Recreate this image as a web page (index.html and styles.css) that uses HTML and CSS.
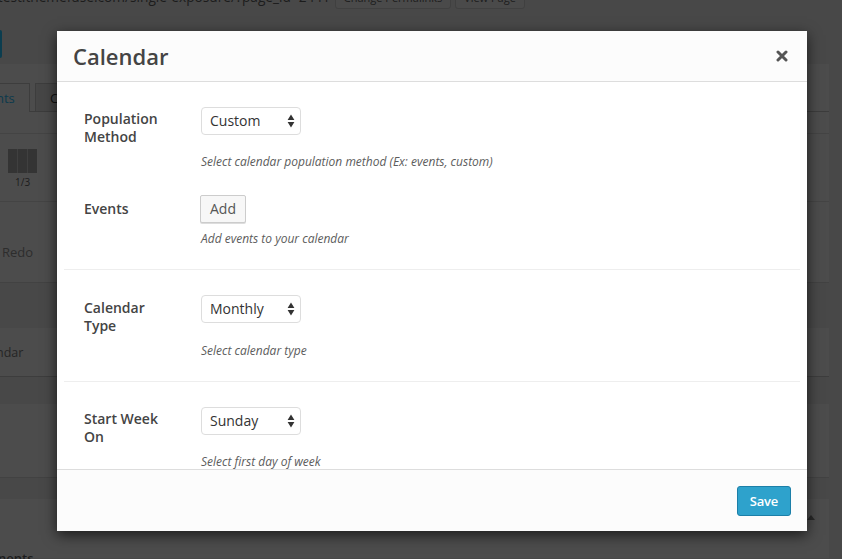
FILE: index.html
```html
<!DOCTYPE html>
<html lang="en">
<head>
<meta charset="utf-8">
<title>Calendar</title>
<link rel="stylesheet" href="styles.css">
</head>
<body>
<div class="page">
  <div class="permalink">
    <span class="url">//test.themefuse.com/single-exposure/?page_id=2441</span>
    <span class="mini-btn change">Change Permalinks</span>
    <span class="mini-btn view">View Page</span>
  </div>
  <div class="mode"><span class="mode-btn"></span></div>
  <section class="panel builder">
    <nav class="tabs"><span class="tab active">nts</span><span class="tab">Content</span></nav>
    <div class="columns"><div class="thumb"><i></i><i></i><i></i></div><span>1/3</span></div>
    <div class="history"><span>Redo</span></div>
    <div class="band"></div>
    <div class="item">ndar</div>
    <div class="gap"></div>
  </section>
  <section class="panel next"><span class="toggle"></span><b>nents</b></section>
</div>

<main class="modal">
  <header class="modal-head">
    <h1>Calendar</h1>
    <svg class="close" viewBox="0 0 12 12"><path d="M2 2 10 10M10 2 2 10"/></svg>
  </header>
  <div class="modal-body">
    <div class="option first">
      <label>Population Method</label>
      <div class="field">
        <div class="select">Custom<svg viewBox="0 0 8 14"><path d="M4 .5 7.4 6H.6zM4 13.5 .6 8H7.4z"/></svg></div>
        <p>Select calendar population method (Ex: events, custom)</p>
      </div>
    </div>
    <div class="option events">
      <label>Events</label>
      <div class="field">
        <button class="add">Add</button>
        <p>Add events to your calendar</p>
      </div>
    </div>
    <div class="option divided type">
      <label>Calendar Type</label>
      <div class="field">
        <div class="select">Monthly<svg viewBox="0 0 8 14"><path d="M4 .5 7.4 6H.6zM4 13.5 .6 8H7.4z"/></svg></div>
        <p>Select calendar type</p>
      </div>
    </div>
    <div class="option divided">
      <label>Start Week On</label>
      <div class="field">
        <div class="select">Sunday<svg viewBox="0 0 8 14"><path d="M4 .5 7.4 6H.6zM4 13.5 .6 8H7.4z"/></svg></div>
        <p>Select first day of week</p>
      </div>
    </div>
  </div>
  <footer class="modal-foot"><button class="save">Save</button></footer>
</main>
</body>
</html>
```

FILE: styles.css
```css
* { box-sizing: border-box; }
body {
  margin: 0;
  width: 842px;
  height: 559px;
  overflow: hidden;
  background: #484848;
  font-family: "Open Sans", sans-serif;
  color: #444;
}

/* Dimmed page behind the dialog */
.page { height: 559px; overflow: hidden; color: #1c1c1c; font-size: 13px; }
.permalink { display: flex; align-items: flex-start; height: 30px; padding-left: 1px; }
.url { width: 329px; height: 20px; margin: -12px 5px 0 0; font-size: 13.7px; line-height: 18px; white-space: nowrap; display: flex; justify-content: flex-end; }
.mini-btn { height: 22px; margin: -13px 4px 0 0; border: 1px solid #404040; border-radius: 3px; background: #4a4a4a; font-size: 11px; line-height: 20px; text-align: center; white-space: nowrap; }
.change { width: 116px; }
.view { width: 70px; }
.mode { height: 34px; }
.mode-btn { display: block; width: 2px; height: 28px; background: #0b3d4f; border-radius: 0 2px 2px 0; }
.panel { width: 829px; background: #4c4c4c; }
.builder { height: 414px; border-bottom: 1px solid #424242; }
.tabs { display: flex; align-items: flex-end; gap: 5px; height: 48px; border-bottom: 1px solid #3c3c3c; }
.tab { width: 60px; height: 28px; border: 1px solid #3d3d3d; border-bottom: 0; padding-left: 14px; background: #464646; line-height: 29px; color: #111; }
.tab.active { width: 30px; height: 29px; margin-bottom: -1px; border-left: 0; padding-left: 0; background: #4c4c4c; color: #0b3a4c; text-indent: -4px; }
.columns { height: 69px; margin-top: 21px; border-top: 1px solid #444; border-bottom: 1px solid #444; padding: 15px 0 0 8px; font-size: 10px; line-height: 13px; }
.columns span { margin-left: 7px; }
.thumb { display: flex; gap: 1px; width: 29px; height: 24px; margin-bottom: 3px; background: #404040; }
.thumb i { flex: 1; background: #343434; }
.history { height: 81px; padding: 41px 0 0 2px; border-bottom: 1px solid #424242; font-size: 13px; line-height: 18px; color: #2d2d2d; }
.band { height: 45px; background: #484848; }
.item { height: 49px; border-bottom: 1px solid #3d3d3d; line-height: 49px; font-size: 12.5px; color: #252525; text-indent: -4px; }
.gap { height: 27px; background: #484848; }
.next { height: 59px; margin-top: 21px; padding-top: 16px; }
.next b { display: block; margin-top: 29px; line-height: 18px; font-size: 13px; font-weight: 600; text-indent: -2px; }
.toggle { display: block; width: 0; height: 0; margin-left: 807px; border: 4px solid transparent; border-top: 0; border-bottom: 5px solid #292929; }

/* Dialog */
.modal {
  position: absolute;
  left: 57px;
  top: 31px;
  width: 750px;
  height: 500px;
  display: flex;
  flex-direction: column;
  background: #fff;
  box-shadow: 0 4px 13px rgba(0, 0, 0, .65);
}
.modal-head { flex: 0 0 51px; display: flex; align-items: center; justify-content: space-between; padding: 0 19px 0 16px; background: #fcfcfc; border-bottom: 1px solid #ddd; }
h1 { margin: 0; font-size: 22px; line-height: 30px; font-weight: 600; }
.close { width: 12px; height: 12px; fill: none; stroke: #555; stroke-width: 3; stroke-linecap: round; }
.modal-body { flex: 1; min-height: 0; overflow: hidden; padding: 0 7px; }
.option { display: flex; padding-left: 20px; }
.first { height: 113px; padding-top: 25px; }
.events { height: 74px; }
.divided { height: 112px; padding-top: 25px; border-top: 1px solid #eee; }
label { width: 116px; padding: 3px 30px 0 0; font-size: 14px; line-height: 18px; font-weight: 600; }
.events label { padding-top: 5px; }
.type label { padding-top: 4px; }
.field { flex: 1; }
.select { display: flex; align-items: center; justify-content: space-between; width: 100px; height: 28px; margin-left: 1px; padding: 0 5px 0 8px; border: 1px solid #ddd; border-radius: 4px; font-size: 14px; line-height: 26px; color: #333; }
.select svg { width: 8px; height: 14px; fill: #333; }
.field p { margin: 18px 0 0 1px; font-size: 12px; line-height: 18px; font-style: italic; color: #5c5c5c; white-space: nowrap; }
.type .field p { margin-top: 19px; }
.add { display: block; width: 46px; height: 28px; padding: 0; border: 1px solid #ccc; border-radius: 2px; background: #f7f7f7; box-shadow: 0 1px 0 #ddd; font: 14px/26px "Open Sans", sans-serif; color: #555; }
.events .field p { margin-top: 7px; }
.modal-foot { flex: 0 0 62px; display: flex; align-items: center; justify-content: flex-end; padding-right: 16px; background: #fcfcfc; border-top: 1px solid #ddd; }
.save { width: 54px; height: 30px; padding: 0; border: 1px solid #1c7fa8; border-radius: 3px; background: #2ea2cc; font: 600 13px/28px "Open Sans", sans-serif; letter-spacing: -.2px; color: #fff; }
```
